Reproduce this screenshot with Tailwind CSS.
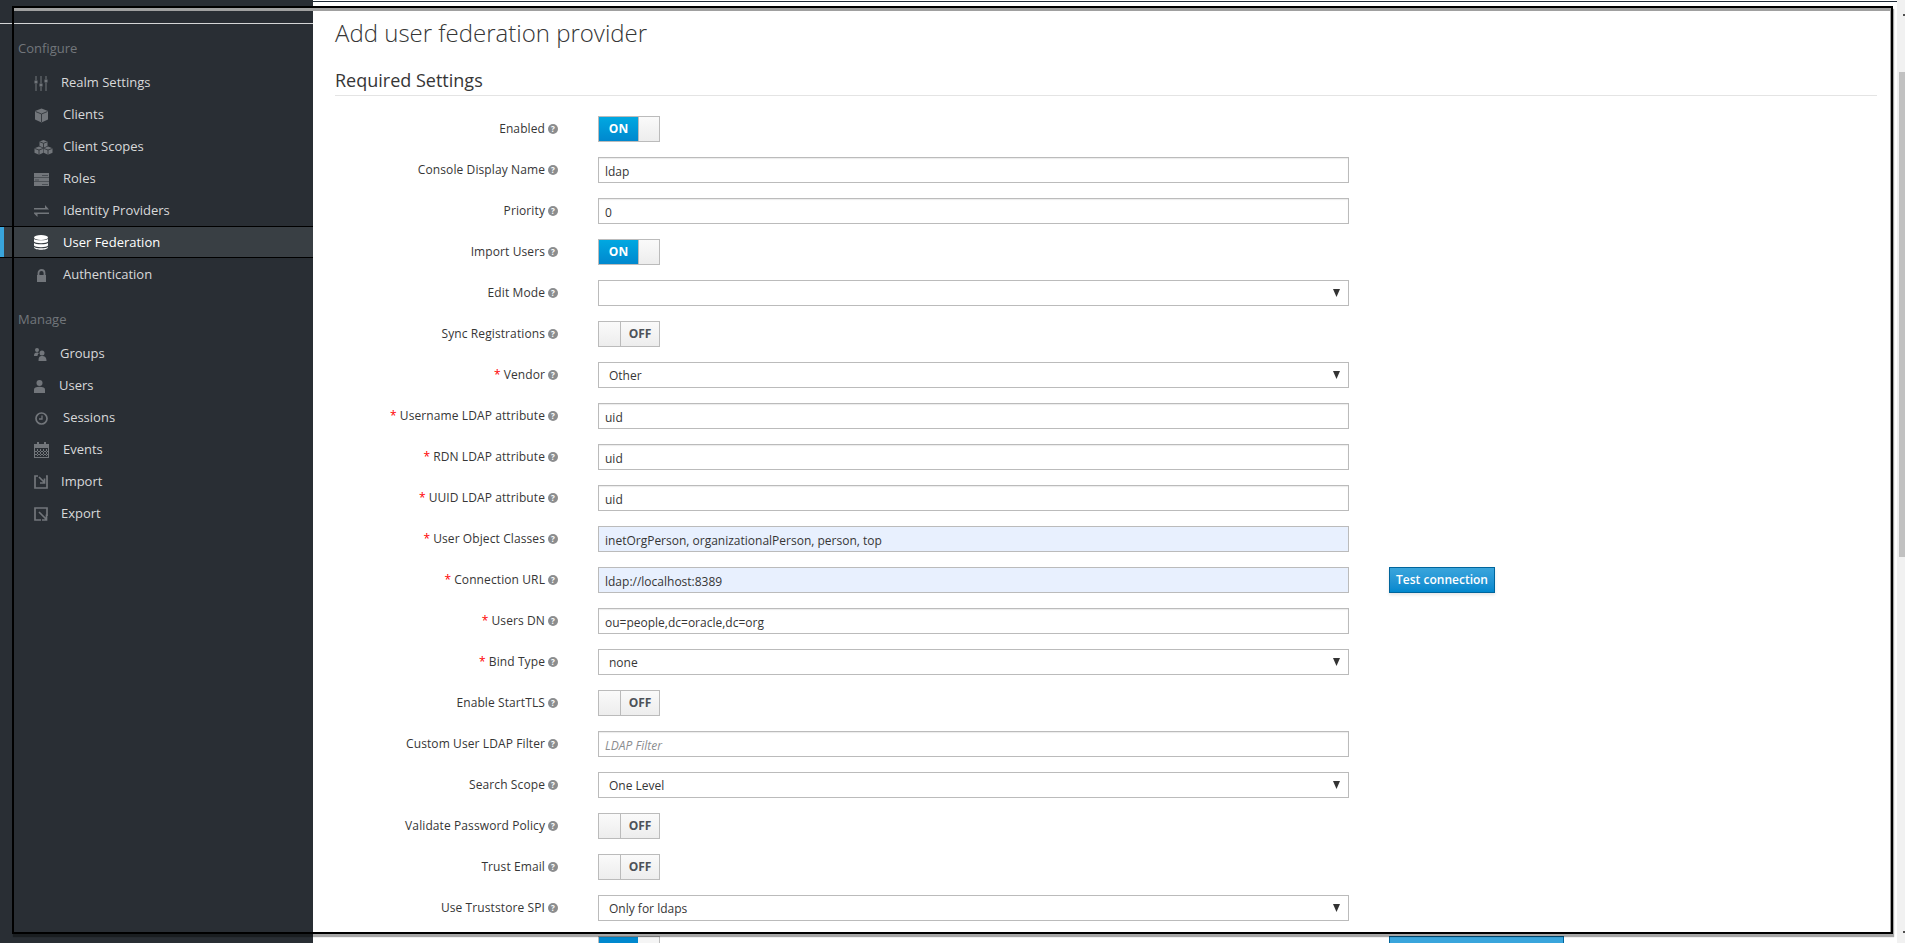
<!DOCTYPE html>
<html lang="en">
<head>
    <meta charset="UTF-8">
    <title>Add user federation provider</title>
    <script src="https://cdn.jsdelivr.net/npm/@tailwindcss/browser@4"></script>
</head>
<body class="bg-white text-[#363636] font-['Open_Sans',sans-serif] text-[13px]">

    <div class="relative h-screen flex overflow-hidden">

        <!-- sidebar -->
        <aside class="w-[313px] shrink-0 bg-[#292e34] text-[#d8d9da] pt-[23px]">
            <div class="h-px bg-[#d5d6d7]"></div>
            <div class="pl-[18px] pt-[15px] h-[42px] text-[#72767b] leading-[18px]">Configure</div>
            <nav class="flex flex-col">
                <a class="h-[32px] pl-[34px] pt-[2px] flex items-center">
                    <svg class="w-[14px] h-[15px] text-[#72767b]" viewBox="0 0 14 15" fill="currentColor"><path d="M1.500 0h1v4h-1zM1.500 8h1v7h-1zM6.500 0h1v7h-1zM6.500 11h1v4h-1zM11.500 0h1v3h-1zM11.500 7h1v8h-1z"/><path d="M.5 4.500h3v3h-3zM5.500 7.500h3v3h-3zM10.500 3.500h3v3h-3z"/></svg>
                    <span class="ml-[13px]">Realm Settings</span>
                </a>
                <a class="h-[32px] pl-[34px] pt-[2px] flex items-center">
                    <svg class="w-[15px] h-[15px] text-[#72767b]" viewBox="0 0 15 15"><path d="M7.500.5 14 3v8.500L7.500 14.500 1 11.500V3z" fill="currentColor"/><path d="M1.500 3.500l6 2.500 6-2.500M7.500 6v8" fill="none" stroke="#292e34" stroke-width=".8"/></svg>
                    <span class="ml-[14px]">Clients</span>
                </a>
                <a class="h-[32px] pl-[34px] pt-[2px] flex items-center">
                    <svg class="w-[19px] h-[15px] text-[#72767b]" viewBox="0 0 19 15"><g fill="currentColor"><path d="M9.500 0l4 1.500v4.500l-4 1.800-4-1.800V1.500z"/><path d="M5 6.500l4.300 1.700v4.600L5 14.800.5 12.800V8.200z"/><path d="M14 6.500l4.500 1.700v4.600l-4.500 2-4.300-2V8.200z"/></g><path d="M5.500 1.700l4 1.600 4-1.600M9.500 3.300v4.500M.5 8.400 5 10l4.300-1.600M5 10v4.800M9.700 8.400 14 10l4.500-1.600M14 10v4.800" fill="none" stroke="#292e34" stroke-width=".8"/></svg>
                    <span class="ml-[10px]">Client Scopes</span>
                </a>
                <a class="h-[32px] pl-[34px] pt-[2px] flex items-center">
                    <svg class="w-[15px] h-[13px] text-[#72767b]" viewBox="0 0 15 13" fill="currentColor"><path d="M0 0h15v4H0zM0 4.500h15v4H0zM0 9h15v4H0z"/><path d="M8 2h6v1H8zM1 6.500h4v1H1zM8 11h6v1H8z" fill="#4a4f55"/></svg>
                    <span class="ml-[14px]">Roles</span>
                </a>
                <a class="h-[32px] pl-[34px] pt-[2px] flex items-center">
                    <svg class="w-[15px] h-[12px] text-[#72767b]" viewBox="0 0 15 12" fill="currentColor"><path d="M0 3h11V0l4 4.500H0z"/><path d="M0 7.500h15v1.500H3.500V12L0 8.500z"/></svg>
                    <span class="ml-[14px]">Identity Providers</span>
                </a>
                <a class="relative h-[32px] pl-[34px] pt-[1px] flex items-center bg-[#393f44] border-y border-black text-white font-medium">
                    <span class="absolute left-0 top-0 bottom-0 w-[4px] bg-[#39a5dc]"></span>
                    <svg class="w-[14px] h-[15px] text-white" viewBox="0 0 14 15" fill="currentColor"><ellipse cx="7" cy="2.500" rx="7" ry="2.500"/><path d="M0 4c1 1.800 13 1.800 14 0v2.500c-1 2.200-13 2.200-14 0zM0 8c1 1.800 13 1.800 14 0v2.500c-1 2.200-13 2.200-14 0zM0 12c1 1.800 13 1.800 14 0v.5c-1 3-13 3-14 0z"/></svg>
                    <span class="ml-[15px]">User Federation</span>
                </a>
                <a class="h-[32px] pl-[34px] pt-[2px] flex items-center">
                    <svg class="w-[15px] h-[15px] text-[#72767b]" viewBox="0 0 15 15" fill="none"><path d="M4.500 7V5a3 3 0 0 1 6 0v2" stroke="currentColor" stroke-width="1.800"/><path d="M3 7h9v7H3z" fill="currentColor"/></svg>
                    <span class="ml-[14px]">Authentication</span>
                </a>
            </nav>
            <div class="pl-[18px] pt-[20px] h-[47px] text-[#72767b] leading-[18px]">Manage</div>
            <nav class="flex flex-col">
                <a class="h-[32px] pl-[34px] pt-[2px] flex items-center">
                    <svg class="w-[13px] h-[13px] text-[#72767b]" viewBox="0 0 13 13" fill="currentColor"><circle cx="3" cy="2" r="2"/><path d="M0 8c0-3 1-3.500 3-3.500 1 0 1.500.3 2 .8C4 6 3.500 7 3.500 8z"/><circle cx="8" cy="5" r="2.500"/><path d="M4.500 13c0-4 1-5 3.500-5s4.500 1 4.500 5z"/></svg>
                    <span class="ml-[13px]">Groups</span>
                </a>
                <a class="h-[32px] pl-[34px] pt-[2px] flex items-center">
                    <svg class="w-[11px] h-[13px] text-[#72767b]" viewBox="0 0 11 13" fill="currentColor"><circle cx="5.500" cy="3" r="3"/><path d="M0 13V9.500C0 7.500 2 6.700 5.500 6.700S11 7.500 11 9.500V13z"/></svg>
                    <span class="ml-[14px]">Users</span>
                </a>
                <a class="h-[32px] pl-[34px] pt-[2px] flex items-center">
                    <svg class="w-[15px] h-[15px] text-[#72767b]" viewBox="0 0 15 15" fill="none" stroke="currentColor"><circle cx="7.500" cy="7.500" r="5.500" stroke-width="1.700"/><path d="M8 4.500V8H5" stroke-width="1.300"/></svg>
                    <span class="ml-[14px]">Sessions</span>
                </a>
                <a class="h-[32px] pl-[34px] pt-[2px] flex items-center">
                    <svg class="w-[15px] h-[16px] text-[#72767b]" viewBox="0 0 15 16" fill="currentColor"><path d="M3 0h2v3H3zM10 0h2v3h-2zM0 2h15v14H0zM1 6v9h13V6z"/><path d="M3 7v7h1V7zM6 7v7h1V7zM9 7v7h1V7zM12 7v7h1V7zM1 9h13v1H1zM1 12h13v1H1z"/></svg>
                    <span class="ml-[14px]">Events</span>
                </a>
                <a class="h-[32px] pl-[34px] pt-[2px] flex items-center">
                    <svg class="w-[14px] h-[14px] text-[#72767b]" viewBox="0 0 14 14" fill="none" stroke="currentColor" stroke-width="1.700"><path d="M4 1H1v12h12V1h-1"/><path d="M5 2l5 5M10.500 3.500V8H6" /></svg>
                    <span class="ml-[13px]">Import</span>
                </a>
                <a class="h-[32px] pl-[34px] pt-[2px] flex items-center">
                    <svg class="w-[14px] h-[14px] text-[#72767b]" viewBox="0 0 14 14" fill="none" stroke="currentColor" stroke-width="1.700"><path d="M13 9V1H1v12h6"/><path d="M5 5l7 7M12.500 7.500V13H8"/></svg>
                    <span class="ml-[13px]">Export</span>
                </a>
            </nav>
        </aside>

        <!-- page -->
        <main class="flex-1 min-w-0 border-t border-[#1f2a36] mt-px pl-[22px] pr-[20px] pt-[16px] text-[12px]">
            <h1 class="text-[24px] font-light leading-[30px]">Add user federation provider</h1>
            <h2 class="mt-[19px] text-[18px] leading-[26px] pb-[2px] border-b border-[#e4e4e4]">Required Settings</h2>
            <form id="rows" class="mt-[20px] flex flex-col gap-[15px]"></form>
        </main>

        <!-- scrollbar -->
        <div class="relative w-[8px] shrink-0 bg-[#f1f1f1] pl-[2px] pt-[72px]">
            <div class="h-[485px] bg-[#c1c1c1]"></div>
            <span class="absolute right-0 top-[14px] w-[2px] h-[2px] bg-[#505050]"></span>
            <span class="absolute right-0 top-[931px] w-[2px] h-[2px] bg-[#505050]"></span>
        </div>

        <!-- black frame laid over the whole page -->
        <div class="absolute left-[12px] top-[6px] w-[1881px] h-[928px] border-2 border-black shadow-[inset_-1px_3px_0_#a0a0a0,1px_3px_1px_rgba(0,0,0,0.35)] pointer-events-none"></div>
    </div>

    <script>
        const on = `<div class="ml-[40px] flex w-[62px] h-[26px] border border-[#bbb] text-white font-bold"><span class="w-[39px] flex items-center justify-center bg-linear-to-b from-[#00a8e1] to-[#0088ce]">ON</span><span class="flex-1 bg-linear-to-b from-[#fafafa] to-[#ededed] border-l border-[#bbb]"></span></div>`;
        const off = `<div class="ml-[40px] flex w-[62px] h-[26px] border border-[#bbb] font-bold text-[#4d5258]"><span class="w-[22px] bg-linear-to-b from-[#fafafa] to-[#ededed] border-r border-[#bbb]"></span><span class="flex-1 flex items-center justify-center bg-linear-to-b from-[#fafafa] to-[#ededed]">OFF</span></div>`;
        const input = v => `<input class="ml-[40px] w-[751px] h-[26px] border border-[#bbb] pl-[6px] pr-[6px] pt-[2px] shadow-[inset_0_1px_1px_rgba(3,3,3,0.08)]" value="${v}">`;
        const filled = v => `<input class="ml-[40px] w-[751px] h-[26px] border border-[#bbb] pl-[6px] pr-[6px] pt-[2px] bg-[#e8f0fe]" value="${v}">`;
        const select = v => `<div class="ml-[40px] w-[751px] h-[26px] border border-[#bbb] pl-[10px] pr-[8px] flex items-center justify-between"><span class="pt-[2px]">${v}</span><svg class="w-[7px] h-[8px] text-[#333]" viewBox="0 0 7 8" fill="currentColor"><path d="M0 0h7L3.500 8z"/></svg></div>`;

        const rows = [
            ['Enabled', on], ['Console Display Name', input('ldap')], ['Priority', input('0')],
            ['Import Users', on], ['Edit Mode', select('')], ['Sync Registrations', off],
            ['Vendor', select('Other'), 1], ['Username LDAP attribute', input('uid'), 1],
            ['RDN LDAP attribute', input('uid'), 1], ['UUID LDAP attribute', input('uid'), 1],
            ['User Object Classes', filled('inetOrgPerson, organizationalPerson, person, top'), 1],
            ['Connection URL', filled('ldap://localhost:8389') + `<button type="button" class="ml-[40px] w-[106px] h-[26px] border border-[#00659c] bg-linear-to-b from-[#39a5dc] to-[#0088ce] text-white font-semibold shadow-[0_2px_3px_rgba(3,3,3,0.1)]">Test connection</button>`, 1],
            ['Users DN', input('ou=people,dc=oracle,dc=org'), 1], ['Bind Type', select('none'), 1],
            ['Enable StartTLS', off],
            ['Custom User LDAP Filter', `<input class="ml-[40px] w-[751px] h-[26px] border border-[#bbb] pl-[6px] pr-[6px] pt-[2px] placeholder:italic placeholder:text-[#8b8d8f] shadow-[inset_0_1px_1px_rgba(3,3,3,0.08)]" placeholder="LDAP Filter">`],
            ['Search Scope', select('One Level')], ['Validate Password Policy', off],
            ['Trust Email', off], ['Use Truststore SPI', select('Only for ldaps')]
        ];

        document.getElementById('rows').innerHTML = rows.map(([label, control, required]) => `
            <div class="flex h-[26px] items-center">
                <label class="w-[223px] flex justify-end items-center gap-[3px] font-medium tracking-[0.1px]">
                    ${required ? '<b class="font-normal text-[#f00]">*</b>' : ''} ${label}
                    <i class="w-[10px] h-[10px] rounded-full bg-[#8b8d8f] text-white text-[8px] font-bold not-italic leading-[10px] text-center">?</i>
                </label>
                ${control}
            </div>`).join('') + `
            <div class="flex h-[26px] items-center">
                <div class="ml-[263px] w-[62px] h-[26px] flex border border-[#bbb]"><span class="w-[39px] bg-[#0088ce]"></span><span class="flex-1 bg-[#f5f5f5]"></span></div>
                <div class="ml-[729px] w-[175px] h-[26px] border border-[#00659c] bg-[#39a5dc]"></div>
            </div>`;
    </script>
</body>
</html>
